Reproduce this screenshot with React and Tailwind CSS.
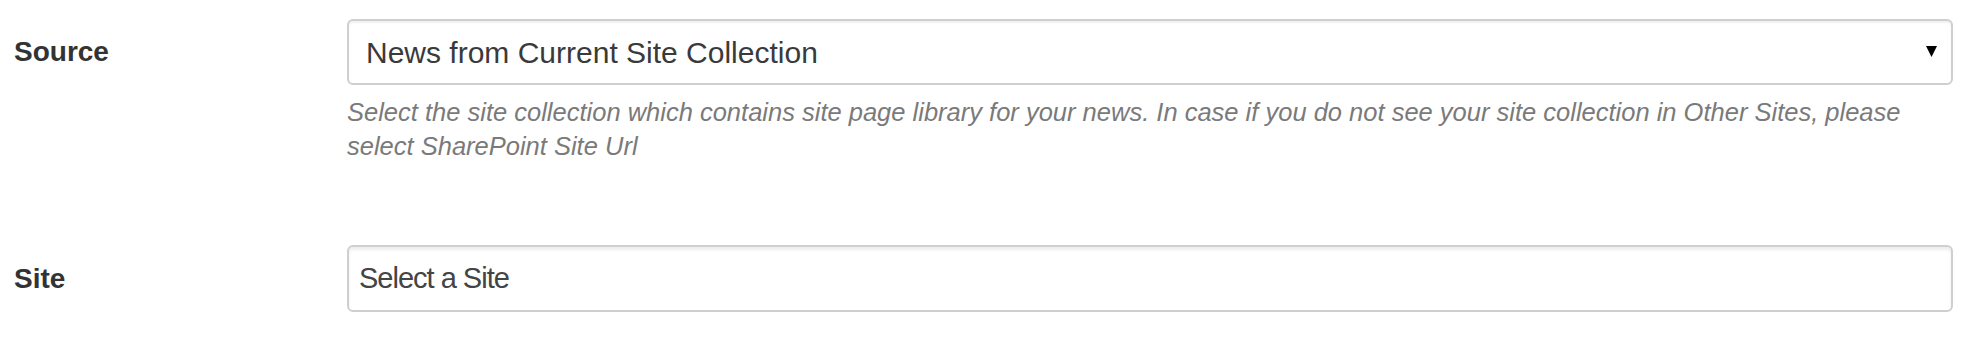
export default function App() {
  return (
    <div className="w-[1974px] h-[346px] bg-white pt-[19px] font-['Liberation_Sans',Arial,sans-serif] text-[#333]">
      <div className="flex">
        <div className="w-[347px] h-[66px] pl-[14px] flex items-center">
          <span className="text-[28px] font-bold text-[#333]">Source</span>
        </div>
        <div className="w-[1606px]">
          <div className="h-[66px] flex items-center justify-between rounded-[6px] border-2 border-[#cfcfcf] bg-white pl-[17px] pr-[14px] shadow-[inset_0_2px_2px_rgba(0,0,0,0.06)]">
            <span className="text-[30px] text-[#3a3a3a]">News from Current Site Collection</span>
            <svg width="11" height="11" viewBox="0 0 11 11" className="mb-[2px]">
              <polygon points="0,0 11,0 5.5,11" fill="#000" />
            </svg>
          </div>
          <p className="mt-[10px] text-[25.5px] leading-[34px] italic text-[#7a7a7a]">
            Select the site collection which contains site page library for your news. In case if you do not see your site collection in Other Sites, please select SharePoint Site Url
          </p>
        </div>
      </div>
      <div className="flex mt-[82px]">
        <div className="w-[347px] h-[67px] pl-[14px] flex items-center">
          <span className="text-[28px] font-bold text-[#333]">Site</span>
        </div>
        <div className="w-[1606px]">
          <div className="h-[67px] flex items-center rounded-[6px] border-2 border-[#cfcfcf] bg-white pl-[10px] shadow-[inset_0_3px_3px_rgba(0,0,0,0.07)]">
            <span className="text-[29px] tracking-[-1px] text-[#444]">Select a Site</span>
          </div>
        </div>
      </div>
    </div>
  );
}
